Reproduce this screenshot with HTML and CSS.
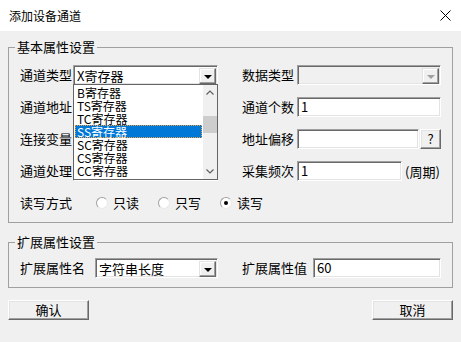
FILE: index.html
```html
<!DOCTYPE html>
<html lang="zh-CN">
  <head>
    <meta charset="UTF-8" />
    <title>添加设备通道</title>
    <link rel="stylesheet" href="styles.css">
  </head>
  <body>
    <div class="window">
      <div class="titlebar">
        <span class="title">添加设备通道</span>
        <svg class="close" width="11" height="11" viewBox="0 0 11 11">
          <path d="M0.5 0.5 L10.5 10.5 M10.5 0.5 L0.5 10.5" stroke="#000" stroke-width="1" />
        </svg>
      </div>

      <div class="body">
        <fieldset class="group basic">
          <legend>基本属性设置</legend>
          <div class="grid">
            <div class="label">通道类型</div>
            <div class="combo-wrap">
              <div class="combo">
                <span class="value">X寄存器</span>
                <span class="drop"><i class="tri"></i></span>
              </div>
              <!-- open drop-down list -->
              <div class="list">
                <div class="items">
                  <div class="item">B寄存器</div>
                  <div class="item">TS寄存器</div>
                  <div class="item">TC寄存器</div>
                  <div class="item selected">SS寄存器</div>
                  <div class="item">SC寄存器</div>
                  <div class="item">CS寄存器</div>
                  <div class="item">CC寄存器</div>
                </div>
                <div class="scrollbar">
                  <svg class="arrow" width="14" height="16" viewBox="0 0 14 16">
                    <path d="M3.5 9.5 L7 6 L10.5 9.5" fill="none" stroke="#606060" stroke-width="1.2" />
                  </svg>
                  <div class="track"><div class="thumb"></div></div>
                  <svg class="arrow" width="14" height="16" viewBox="0 0 14 16">
                    <path d="M3.5 6.5 L7 10 L10.5 6.5" fill="none" stroke="#606060" stroke-width="1.2" />
                  </svg>
                </div>
              </div>
            </div>
            <div class="label right">数据类型</div>
            <div class="combo disabled">
              <span class="value"></span>
              <span class="drop"><i class="tri"></i></span>
            </div>

            <div class="label">通道地址</div>
            <div class="field"></div>
            <div class="label right">通道个数</div>
            <div class="field">1</div>

            <div class="label">连接变量</div>
            <div class="combo">
              <span class="value"></span>
              <span class="drop"><i class="tri"></i></span>
            </div>
            <div class="label right">地址偏移</div>
            <div class="inline">
              <div class="field offset"></div>
              <div class="btn small">?</div>
            </div>

            <div class="label">通道处理</div>
            <div class="combo">
              <span class="value"></span>
              <span class="drop"><i class="tri"></i></span>
            </div>
            <div class="label right">采集频次</div>
            <div class="inline">
              <div class="field freq">1</div>
              <span class="unit">(周期)</span>
            </div>

            <div class="label">读写方式</div>
            <div class="radios">
              <label class="radio"><span class="dot"></span>只读</label>
              <label class="radio"><span class="dot"></span>只写</label>
              <label class="radio"><span class="dot checked"></span>读写</label>
            </div>
          </div>
        </fieldset>

        <fieldset class="group ext">
          <legend>扩展属性设置</legend>
          <div class="grid ext-grid">
            <div class="label">扩展属性名</div>
            <div class="combo">
              <span class="value">字符串长度</span>
              <span class="drop"><i class="tri"></i></span>
            </div>
            <div class="label right">扩展属性值</div>
            <div class="field">60</div>
          </div>
        </fieldset>

        <div class="buttons">
          <div class="btn big">确认</div>
          <div class="btn big">取消</div>
        </div>
      </div>
    </div>
  </body>
</html>
```

FILE: styles.css
```css
* {
  margin: 0;
  padding: 0;
  box-sizing: border-box;
}

body {
  font-family: "Noto Sans CJK SC", "Liberation Sans", sans-serif;
  font-size: 13px;
  color: #000;
  background-color: #f0f0f0;
}

.window {
  width: 461px;
  height: 342px;
  background-color: #f0f0f0;
  overflow: hidden;
}

.titlebar {
  height: 31px;
  background-color: #fff;
  display: flex;
  align-items: center;
  justify-content: space-between;
  padding: 0 10px 0 9px;
}

.title {
  font-size: 12px;
  line-height: 14px;
}

.close {
  display: block;
}

.body {
  padding: 0 8px;
}

/* group boxes */
.group {
  border: 1px solid #a0a0a0;
  padding: 11px 9px 9px 11px;
}

.group legend {
  margin-left: -5px;
  padding: 0 2px;
  line-height: 14px;
}

.basic {
  margin-top: 9px;
}

.ext {
  margin-top: 12px;
  padding-top: 9px;
}

.grid {
  display: grid;
  grid-template-columns: 53px 145px 79px 144px;
  grid-auto-rows: 20px;
  row-gap: 12px;
  align-items: center;
}

.ext-grid {
  grid-template-columns: 75px 123px 95px 128px;
}

.label {
  line-height: 20px;
  white-space: nowrap;
}

.label.right {
  padding-left: 24px;
}

/* sunken fields */
.field,
.combo {
  height: 20px;
  background-color: #fff;
  border: 1px solid;
  border-color: #a0a0a0 #fff #fff #a0a0a0;
  box-shadow: inset 1px 1px #696969, inset -1px -1px #e3e3e3;
  padding-left: 3px;
  line-height: 18px;
}

.combo {
  display: flex;
  justify-content: space-between;
  padding: 2px 1px 1px 3px;
  line-height: 16px;
}

.combo .drop {
  width: 17px;
  height: 16px;
  background-color: #f0f0f0;
  border: 1px solid;
  border-color: #e3e3e3 #696969 #696969 #e3e3e3;
  box-shadow: inset -1px -1px #a0a0a0, inset 1px 1px #fff;
  display: flex;
  align-items: center;
  justify-content: center;
}

.tri {
  width: 0;
  height: 0;
  border-left: 4px solid transparent;
  border-right: 4px solid transparent;
  border-top: 4px solid #000;
  margin-top: 1px;
}

.combo.disabled {
  background-color: #f0f0f0;
}

.combo.disabled .tri {
  border-top-color: #a0a0a0;
}

.inline {
  display: flex;
  align-items: center;
}

.field.offset {
  width: 123px;
}

.field.freq {
  width: 105px;
}

.unit {
  margin-left: 3px;
}

/* raised buttons */
.btn {
  background-color: #f0f0f0;
  border: 1px solid;
  border-color: #fff #696969 #696969 #fff;
  box-shadow: inset -1px -1px #a0a0a0, inset 1px 1px #e3e3e3;
  text-align: center;
}

.btn.small {
  width: 21px;
  height: 20px;
  margin-left: 1px;
  line-height: 18px;
}

.btn.big {
  width: 81px;
  height: 20px;
  line-height: 18px;
}

.buttons {
  display: flex;
  justify-content: space-between;
  margin-top: 12px;
}

/* radios */
.radios {
  grid-column: 2 / -1;
  display: flex;
  align-items: center;
  gap: 19px;
  padding-left: 23px;
}

.radio {
  display: flex;
  align-items: center;
  gap: 5px;
  line-height: 20px;
}

.dot {
  width: 12px;
  height: 12px;
  border-radius: 50%;
  background-color: #fff;
  border: 1px solid;
  border-color: #a0a0a0 #e8e8e8 #e8e8e8 #a0a0a0;
  display: flex;
  align-items: center;
  justify-content: center;
}

.dot.checked::after {
  content: "";
  width: 4px;
  height: 4px;
  border-radius: 50%;
  background-color: #000;
}

/* drop-down list of the channel type combo */
.combo-wrap {
  position: relative;
}

.list {
  position: absolute;
  top: 19px;
  left: 0;
  width: 145px;
  height: 96px;
  background-color: #fff;
  border: 1px solid #646464;
  display: flex;
  z-index: 2;
}

.items {
  flex: 1;
  padding: 1px 1px 0;
  overflow: hidden;
}

.item {
  height: 13px;
  line-height: 13px;
  font-size: 12px;
  padding-left: 2px;
  white-space: nowrap;
}

.item.selected {
  background-color: #0078d7;
  color: #fff;
  outline: 1px dotted #f0a040;
  outline-offset: -1px;
}

.scrollbar {
  width: 14px;
  background-color: #f0f0f0;
  display: flex;
  flex-direction: column;
}

.arrow {
  display: block;
}

.track {
  flex: 1;
  padding-top: 15px;
}

.thumb {
  height: 17px;
  background-color: #cdcdcd;
}
```
